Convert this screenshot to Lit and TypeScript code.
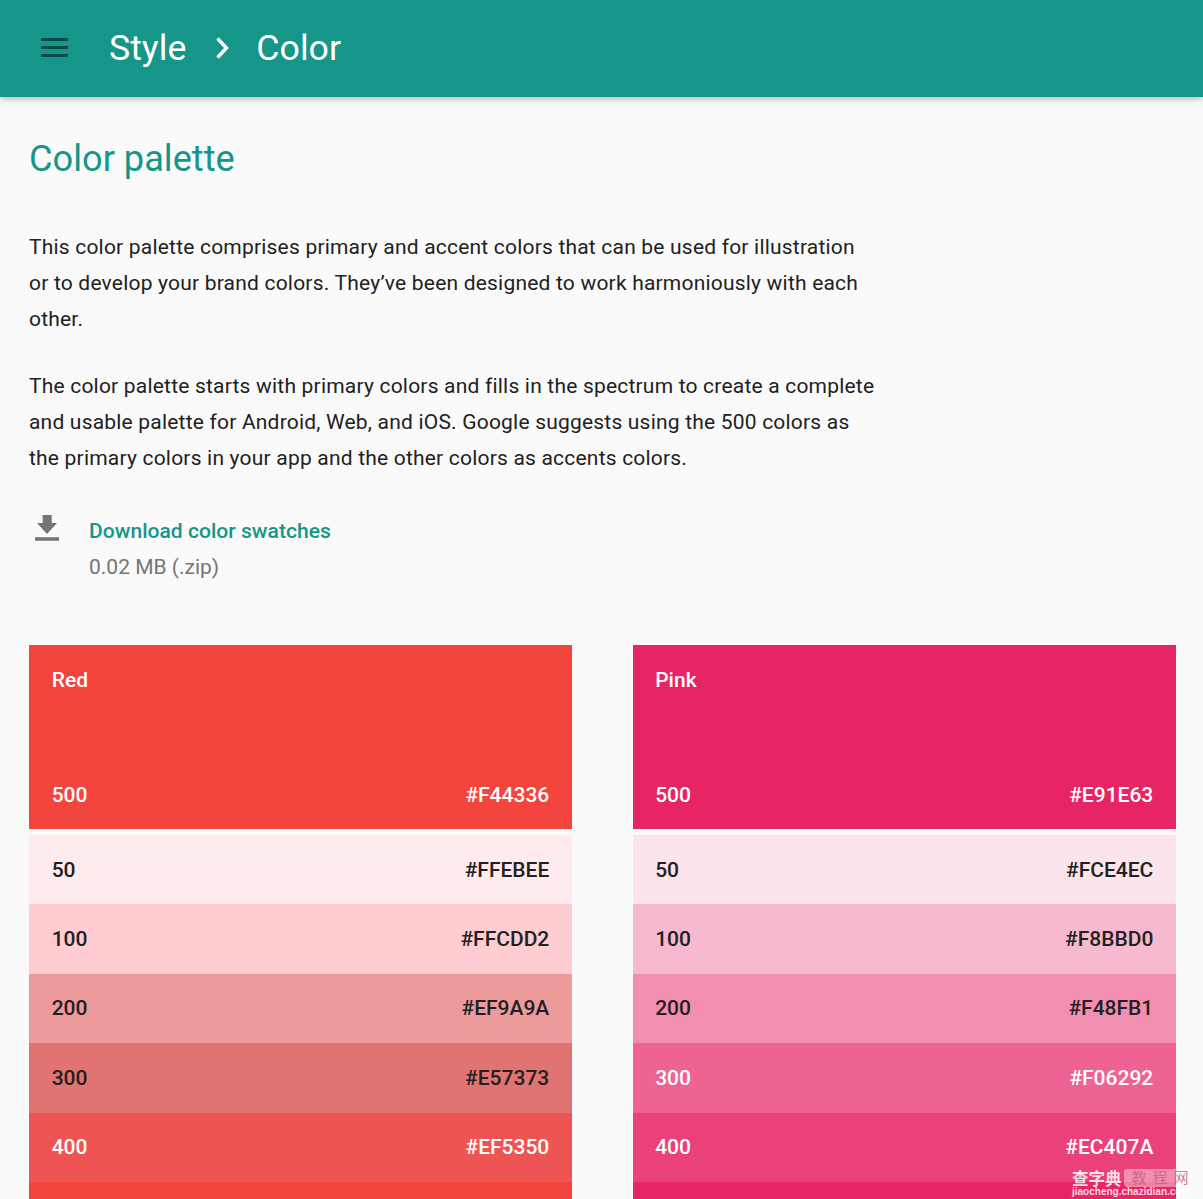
import { LitElement, html, css } from "lit";
import { customElement } from "lit/decorators.js";

type Row = { n: string; hex: string; bg: string; dark: boolean };
type Pal = { name: string; main: string; bg: string; rows: Row[] };

const PALS: Pal[] = [
  {
    name: "Red",
    main: "#F44336",
    bg: "#F4443E",
    rows: [
      { n: "50", hex: "#FFEBEE", bg: "#FFEBEE", dark: true },
      { n: "100", hex: "#FFCDD2", bg: "#FFCCD2", dark: true },
      { n: "200", hex: "#EF9A9A", bg: "#EC9A9A", dark: true },
      { n: "300", hex: "#E57373", bg: "#E27373", dark: true },
      { n: "400", hex: "#EF5350", bg: "#EF5454", dark: false },
      { n: "", hex: "", bg: "#F4443E", dark: false },
    ],
  },
  {
    name: "Pink",
    main: "#E91E63",
    bg: "#E72565",
    rows: [
      { n: "50", hex: "#FCE4EC", bg: "#FBE4EC", dark: true },
      { n: "100", hex: "#F8BBD0", bg: "#F6B9CF", dark: true },
      { n: "200", hex: "#F48FB1", bg: "#F28FB1", dark: true },
      { n: "300", hex: "#F06292", bg: "#EE6393", dark: false },
      { n: "400", hex: "#EC407A", bg: "#EA417B", dark: false },
      { n: "", hex: "", bg: "#E72565", dark: false },
    ],
  },
];

@customElement("app-root")
export class AppRoot extends LitElement {
  static styles = css`
    :host {
      display: block;
      position: relative;
      height: 1199px;
      overflow: hidden;
      background: #fafafa;
      font-family: Roboto, "Noto Sans CJK SC", sans-serif;
      color: #212121;
    }
    .bar {
      height: 97px;
      background: #169688;
      box-shadow: 0 2px 6px rgba(0, 0, 0, 0.28);
      display: flex;
      align-items: center;
      color: #fff;
      font-size: 35.7px;
      padding-left: 41px;
      padding-bottom: 2px;
      box-sizing: border-box;
      position: relative;
    }
    .menu { width: 27px; height: 19px; display: block; margin-right: 41px; }
    .chev { width: 16px; height: 24px; display: block; margin: 0 25px 0 29px; }
    main { padding: 0 27px 0 29px; }
    h1 {
      margin: 0;
      padding-top: 40px;
      font-size: 36.2px;
      line-height: 44px;
      font-weight: 400;
      color: #169688;
    }
    p {
      margin: 0;
      width: 848px;
      font-size: 21px;
      letter-spacing: 0.2px;
      line-height: 36px;
      color: #212121;
    }
    .p1 { margin-top: 48px; }
    .p2 { margin-top: 31px; }
    .dl { display: flex; margin-top: 36px; }
    .dl svg { width: 36px; height: 36px; margin: 0 24px 0 0; flex: none; display: block; }
    .dl a { display: block; padding-top: 1px; font-size: 21.1px; line-height: 36px; font-weight: 500; color: #169688; }
    .dl span { display: block; font-size: 21px; line-height: 36px; color: #757575; }
    .grid {
      display: grid;
      grid-template-columns: 543px 543.5px;
      column-gap: 60.5px;
      margin-top: 60px;
    }
    .head {
      height: 184px;
      padding: 0 22.7px;
      box-sizing: border-box;
      display: flex;
      flex-direction: column;
      color: #fff;
      margin-bottom: 6px;
      font-size: 21px;
      font-weight: 500;
    }
    .head .name { line-height: 24px; padding-top: 23px; flex: 1; }
    .row {
      height: 69.4px;
      padding: 0 22.7px;
      box-sizing: border-box;
      display: flex;
      justify-content: space-between;
      align-items: center;
      font-size: 21px;
      font-weight: 500;
    }
    .head .row2 {
      display: flex;
      justify-content: space-between;
      line-height: 24px;
      padding-bottom: 22px;
    }
    .light { color: #fff; }
    .dark { color: #212121; }
    .wm {
      position: absolute;
      left: 1072px;
      top: 1168px;
      width: 120px;
      color: rgba(255, 255, 255, 0.85);
      pointer-events: none;
    }
    .wm .top { display: flex; align-items: center; height: 19px; font-size: 16.5px; font-weight: 700; white-space: nowrap; }
    .wm .tag {
      margin-left: 2px;
      height: 18px;
      width: 68px;
      flex: none;
      box-sizing: border-box;
      padding-left: 8px;
      background: rgba(255, 255, 255, 0.42);
      border-radius: 3px;
      font-size: 15px;
      line-height: 18px;
      font-weight: 400;
      letter-spacing: 6px;
      color: rgba(200, 90, 130, 0.8);
    }
    .wm .url { font-size: 10px; line-height: 10px; font-weight: 700; font-family: "Liberation Sans", sans-serif; white-space: nowrap; }
  `;

  render() {
    return html`
      <header class="bar">
        <svg class="menu" viewBox="0 0 27 19">
          <path d="M0 0h27v3H0zM0 8h27v3H0zM0 16h27v3H0z" fill="#0b4a44" />
        </svg>
        <span>Style</span>
        <svg class="chev" viewBox="0 0 16 24">
          <path d="M2.5 2.5l9 9.5-9 9.5" fill="none" stroke="#fff" stroke-width="3.4" />
        </svg>
        <span>Color</span>
      </header>
      <main>
        <h1>Color palette</h1>
        <p class="p1">
          This color palette comprises primary and accent colors that can be used for illustration
          or to develop your brand colors. They’ve been designed to work harmoniously with each
          other.
        </p>
        <p class="p2">
          The color palette starts with primary colors and fills in the spectrum to create a complete
          and usable palette for Android, Web, and iOS. Google suggests using the 500 colors as
          the primary colors in your app and the other colors as accents colors.
        </p>
        <div class="dl">
          <svg viewBox="0 0 36 36">
            <path d="M13.7 3h9v8h5.3L18 22 8 11h5.7zM6 25.3h24v3.4H6z" fill="#757575" />
          </svg>
          <div>
            <a>Download color swatches</a>
            <span>0.02 MB (.zip)</span>
          </div>
        </div>
        <div class="grid">
          ${PALS.map(
            (p) => html`
              <section>
                <div class="head" style="background:${p.bg}">
                  <div class="name">${p.name}</div>
                  <div class="row2"><span>500</span><span>${p.main}</span></div>
                </div>
                ${p.rows.map(
                  (r) => html`
                    <div class="row ${r.dark ? "dark" : "light"}" style="background:${r.bg}">
                      <span>${r.n}</span><span>${r.hex}</span>
                    </div>
                  `
                )}
              </section>
            `
          )}
        </div>
      </main>
      <div class="wm">
        <div class="top">查字典<span class="tag">教程网</span></div>
        <div class="url">jiaocheng.chazidian.com</div>
      </div>
    `;
  }
}
